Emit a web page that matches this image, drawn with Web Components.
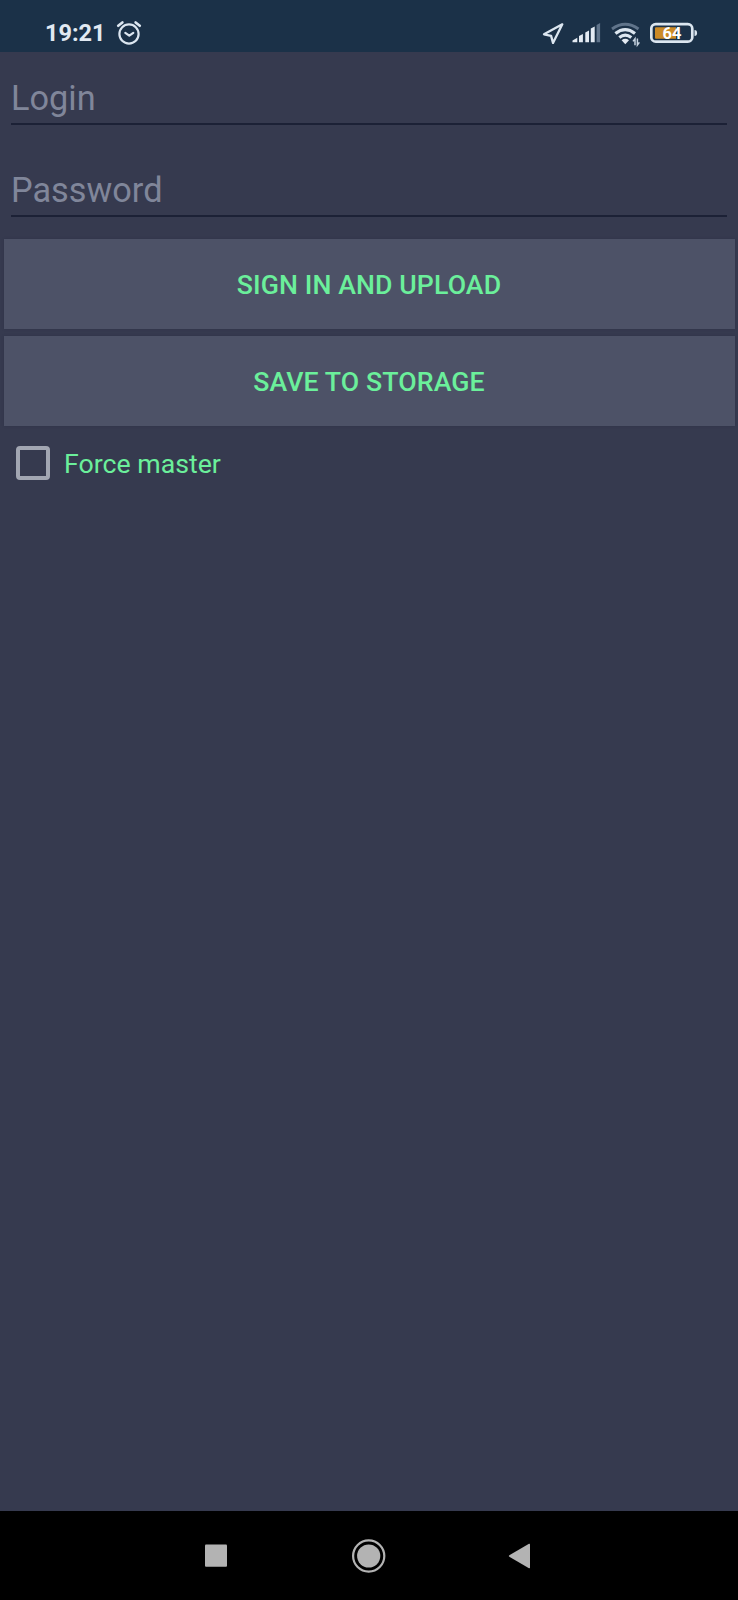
<!DOCTYPE html>
<html lang="en">
<head>
<meta charset="utf-8">
<title>Sign in</title>
<style>
html,body{margin:0;height:100%;background:#363a4f}
body{font-family:Roboto,sans-serif}
</style>
</head>
<body>
<login-screen></login-screen>
<script>
const define = (name, html) => customElements.define(name, class extends HTMLElement {
  constructor() {
    super();
    const t = document.createElement('template');
    t.innerHTML = html;
    this.attachShadow({mode: 'open'}).append(t.content.cloneNode(true));
  }
});

define('status-bar', `
<style>
:host{display:flex;height:52px;box-sizing:border-box;background:#1b3148;color:#e1e9f2;padding:0 40px 0 45px;align-items:center;justify-content:space-between}
.left,.right{display:flex;height:52px;align-items:center}
.time{font-size:23.5px;font-weight:700;line-height:28px;padding-top:14px;width:71px;white-space:nowrap}
svg{display:block;flex:none}
.battery{display:grid;width:48px;height:52px}
.battery>*{grid-area:1/1}
.level{font-size:16.5px;font-weight:700;line-height:20px;padding-top:24px;text-align:center;width:44px;color:#fff;z-index:1}
</style>
<div class="left"><span class="time">19:21</span>
<svg width="26" height="52" viewBox="116 0 26 52" fill="none" stroke="#dce6f0" stroke-width="2.2" stroke-linecap="round"><circle cx="129" cy="34" r="9.6"/><path d="M118.2 25.8l4.2-3.4M139.8 25.8l-4.2-3.4" stroke-width="2.6"/><path d="M125.3 32.8l4 2.9 4-2.9" stroke-linejoin="round"/></svg></div>
<div class="right">
<svg width="110" height="52" viewBox="540 0 110 52">
<path d="M562.3 24.3L544 34.3l7.1 1.6 1.9 7z" fill="none" stroke="#dce6f0" stroke-width="2.3" stroke-linejoin="round"/>
<path d="M572.5 42.3v-1.8l4.8-2.7v4.5zM579 42.3v-6.3l3.9-2.1v8.4zM585.3 42.3V32.5l3.7-2.1v11.9zM590.8 42.3V28.5l3.9-2.1v15.9z" fill="#e4ebf3"/>
<path d="M596.6 42.3V24.9l3.5-1.9v19.3z" fill="#60748b"/>
<g fill="none" stroke-width="2.9"><path d="M612 29q13.2-9.5 26.5 0" stroke="#60748b"/><path d="M615.4 33.4q9.8-7.7 19.6 0M619.3 37.5q6-4.6 12 0" stroke="#dce6f0" stroke-width="3.2"/></g>
<path d="M621.6 40.2q3.7-2.8 7.4 0l-3.7 4z" fill="#e4ebf3"/>
<path d="M635 45.3v-6.5l-2 2.6M637.4 38.5v6.5l2-2.6" fill="none" stroke="#c6d2df" stroke-width="1.5"/>
</svg>
<div class="battery"><span class="level">64</span>
<svg width="48" height="52" viewBox="650 0 48 52"><rect x="651.3" y="24.2" width="41" height="17.5" rx="4.5" fill="none" stroke="#dce6f0" stroke-width="2.7"/><path d="M656 27.3h20v11.4h-20q-1 0-1-1v-9.4q0-1 1-1z" fill="#cc8a26"/><path d="M694.5 30q2.6 0 2.6 3t-2.6 3z" fill="#dce6f0"/></svg></div>
</div>`);

define('text-field', `
<style>
:host{display:block;height:92px;box-sizing:border-box;padding:0 11px}
.box{height:73px;box-sizing:border-box;border-bottom:2px solid #1c2136;padding-top:26px;color:#80869a;font-size:34.3px;line-height:40px}
</style><div class="box"><slot></slot></div>`);

define('action-button', `
<style>
:host{display:flex;height:90px;background:#4d5267;box-shadow:0 0 2px #2f334a;color:#6bef9b;align-items:center;justify-content:center;font-size:26.7px;font-weight:500;line-height:32px;letter-spacing:.1px;text-transform:uppercase}
span{padding-top:1px}
</style><span><slot></slot></span>`);

define('check-box', `
<style>
:host{display:flex;align-items:center;gap:14px;color:#6bef9b;font-size:26.7px;line-height:32px;padding:20px 0 0 16px}
i{display:block;width:34px;height:34px;box-sizing:border-box;border:4px solid #a2a6b2;border-radius:4px}
span{padding-top:1px}
</style><i></i><span><slot></slot></span>`);

define('navigation-bar', `
<style>
:host{display:block;height:89px;background:#000}
svg{display:block}
</style>
<svg width="738" height="89" viewBox="0 1511 738 89" fill="#b3b3b3"><rect x="205" y="1544.5" width="22" height="22.2" rx="1"/><circle cx="368.7" cy="1556" r="11.6"/><circle cx="368.7" cy="1556" r="15.6" fill="none" stroke="#b3b3b3" stroke-width="2.2"/><path d="M509.3 1555.2L529 1543.8q1-.4 1 .7v23q0 1.1-1 .7l-19.7-11.4q-.9-.8 0-1.6z"/></svg>`);

define('login-screen', `
<style>
:host{display:flex;flex-direction:column;width:738px;height:1600px;background:#363a4f;font-family:Roboto,sans-serif}
main{flex:1}
.actions{display:grid;gap:7px;padding:3px 3.5px 0}
</style>
<status-bar></status-bar>
<main>
<text-field>Login</text-field><text-field>Password</text-field>
<div class="actions"><action-button>Sign in and upload</action-button><action-button>Save to storage</action-button></div>
<check-box>Force master</check-box>
</main>
<navigation-bar></navigation-bar>`);
</script>
</body>
</html>
